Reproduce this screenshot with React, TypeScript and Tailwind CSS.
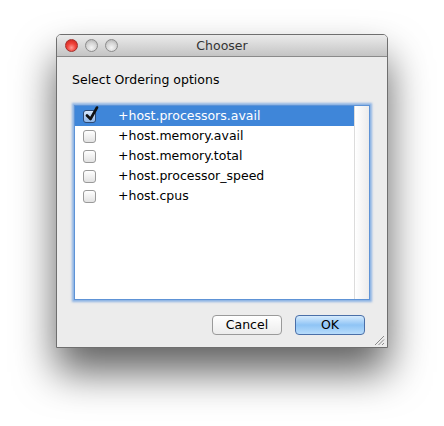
import React, { useState } from "react";

const OPTIONS = [
  "+host.processors.avail",
  "+host.memory.avail",
  "+host.memory.total",
  "+host.processor_speed",
  "+host.cpus",
];

function Light({ red }: { red?: boolean }) {
  return (
    <span
      className={`h-[13px] w-[13px] rounded-full border ${
        red
          ? "border-[#a3302c] bg-[radial-gradient(circle_at_50%_70%,#ff9a94_0%,#f0433a_45%,#c81e17_100%)]"
          : "border-[#8c8c8c] bg-[radial-gradient(circle_at_50%_70%,#f4f4f4_0%,#d6d6d6_50%,#a9a9a9_100%)]"
      }`}
    />
  );
}

function Check({ checked }: { checked: boolean }) {
  return (
    <span
      className={`relative h-[13px] w-[13px] shrink-0 rounded-[3px] border ${
        checked
          ? "border-[#2e4a73] bg-gradient-to-b from-[#d8e8fb] to-[#8fb6e8]"
          : "border-[#9a9a9a] bg-gradient-to-b from-[#ffffff] to-[#e2e2e2]"
      }`}
    >
      {checked && (
        <svg
          viewBox="0 0 14 16"
          className="absolute left-[1px] top-[-5px] h-[16px] w-[14px]"
        >
          <path
            d="M2 9.5 L5.5 13 L12 1.5"
            fill="none"
            stroke="#111"
            strokeWidth="2.6"
            strokeLinecap="round"
            strokeLinejoin="round"
          />
        </svg>
      )}
    </span>
  );
}

export default function App() {
  const [checked, setChecked] = useState<boolean[]>([true, false, false, false, false]);
  const font = { fontFamily: '"DejaVu Sans", "Liberation Sans", sans-serif' };

  return (
    <div className="h-[426px] w-[444px] bg-white pl-[56px] pt-[34px]" style={font}>
      <div className="flex h-[314px] w-[332px] flex-col rounded-t-[5px] border border-[#6f6f6f] bg-[#ececec] shadow-[0_24px_40px_rgba(0,0,0,0.62)]">
        {/* Title bar */}
        <div className="relative flex h-[22px] shrink-0 items-center rounded-t-[4px] border-b border-[#8a8a8a] bg-gradient-to-b from-[#ebebeb] to-[#c4c4c4] pl-[8px]">
          <div className="flex gap-[7px]">
            <Light red />
            <Light />
            <Light />
          </div>
          <div className="absolute inset-0 flex items-center justify-center pt-[1px] text-[12.5px] text-[#333]">
            Chooser
          </div>
        </div>

        {/* Body */}
        <div className="flex flex-1 flex-col pl-[15px] pr-[22px]">
          <div className="mt-[15px] h-[16px] text-[12.5px] leading-[16px] text-black">
            Select Ordering options
          </div>

          <div className="ml-[3px] mt-[18px] flex h-[193px] w-[294px] bg-white shadow-[0_0_0_1px_#5e93d6,0_0_2px_3px_rgba(110,160,225,0.75)]">
            <div className="flex-1">
              {OPTIONS.map((opt, i) => (
                <div
                  key={opt}
                  onClick={() =>
                    setChecked((c) => c.map((v, j) => (j === i ? !v : v)))
                  }
                  className={`flex h-[20px] items-center pl-[8px] text-[12.5px] ${
                    i === 0 ? "bg-[#3f86d9] text-white" : "text-black"
                  }`}
                >
                  <Check checked={checked[i]} />
                  <span className="ml-[22px]">{opt}</span>
                </div>
              ))}
            </div>
            <div className="w-[15px] border-l border-[#dcdcdc] bg-gradient-to-r from-[#ffffff] to-[#ececec]" />
          </div>

          <div className="mt-[16px] flex justify-end gap-[13px]">
            <button className="h-[20px] w-[70px] rounded-[4px] border border-[#9a9a9a] bg-gradient-to-b from-[#ffffff] to-[#ececec] text-[12.5px] leading-[18px] text-black">
              Cancel
            </button>
            <button className="h-[20px] w-[70px] rounded-[4px] border border-[#4a6fa8] bg-gradient-to-b from-[#d6ebfd] via-[#8fc4f5] to-[#b7dcfb] text-[12.5px] leading-[18px] text-black">
              OK
            </button>
          </div>

          <div className="mt-auto flex justify-end">
            <svg viewBox="0 0 11 11" className="mb-[2px] mr-[-20px] h-[11px] w-[11px]">
              <path d="M1 10 L10 1 M4.5 10 L10 4.5 M8 10 L10 8" stroke="#8a8a8a" strokeWidth="1" />
            </svg>
          </div>
        </div>
      </div>
    </div>
  );
}
